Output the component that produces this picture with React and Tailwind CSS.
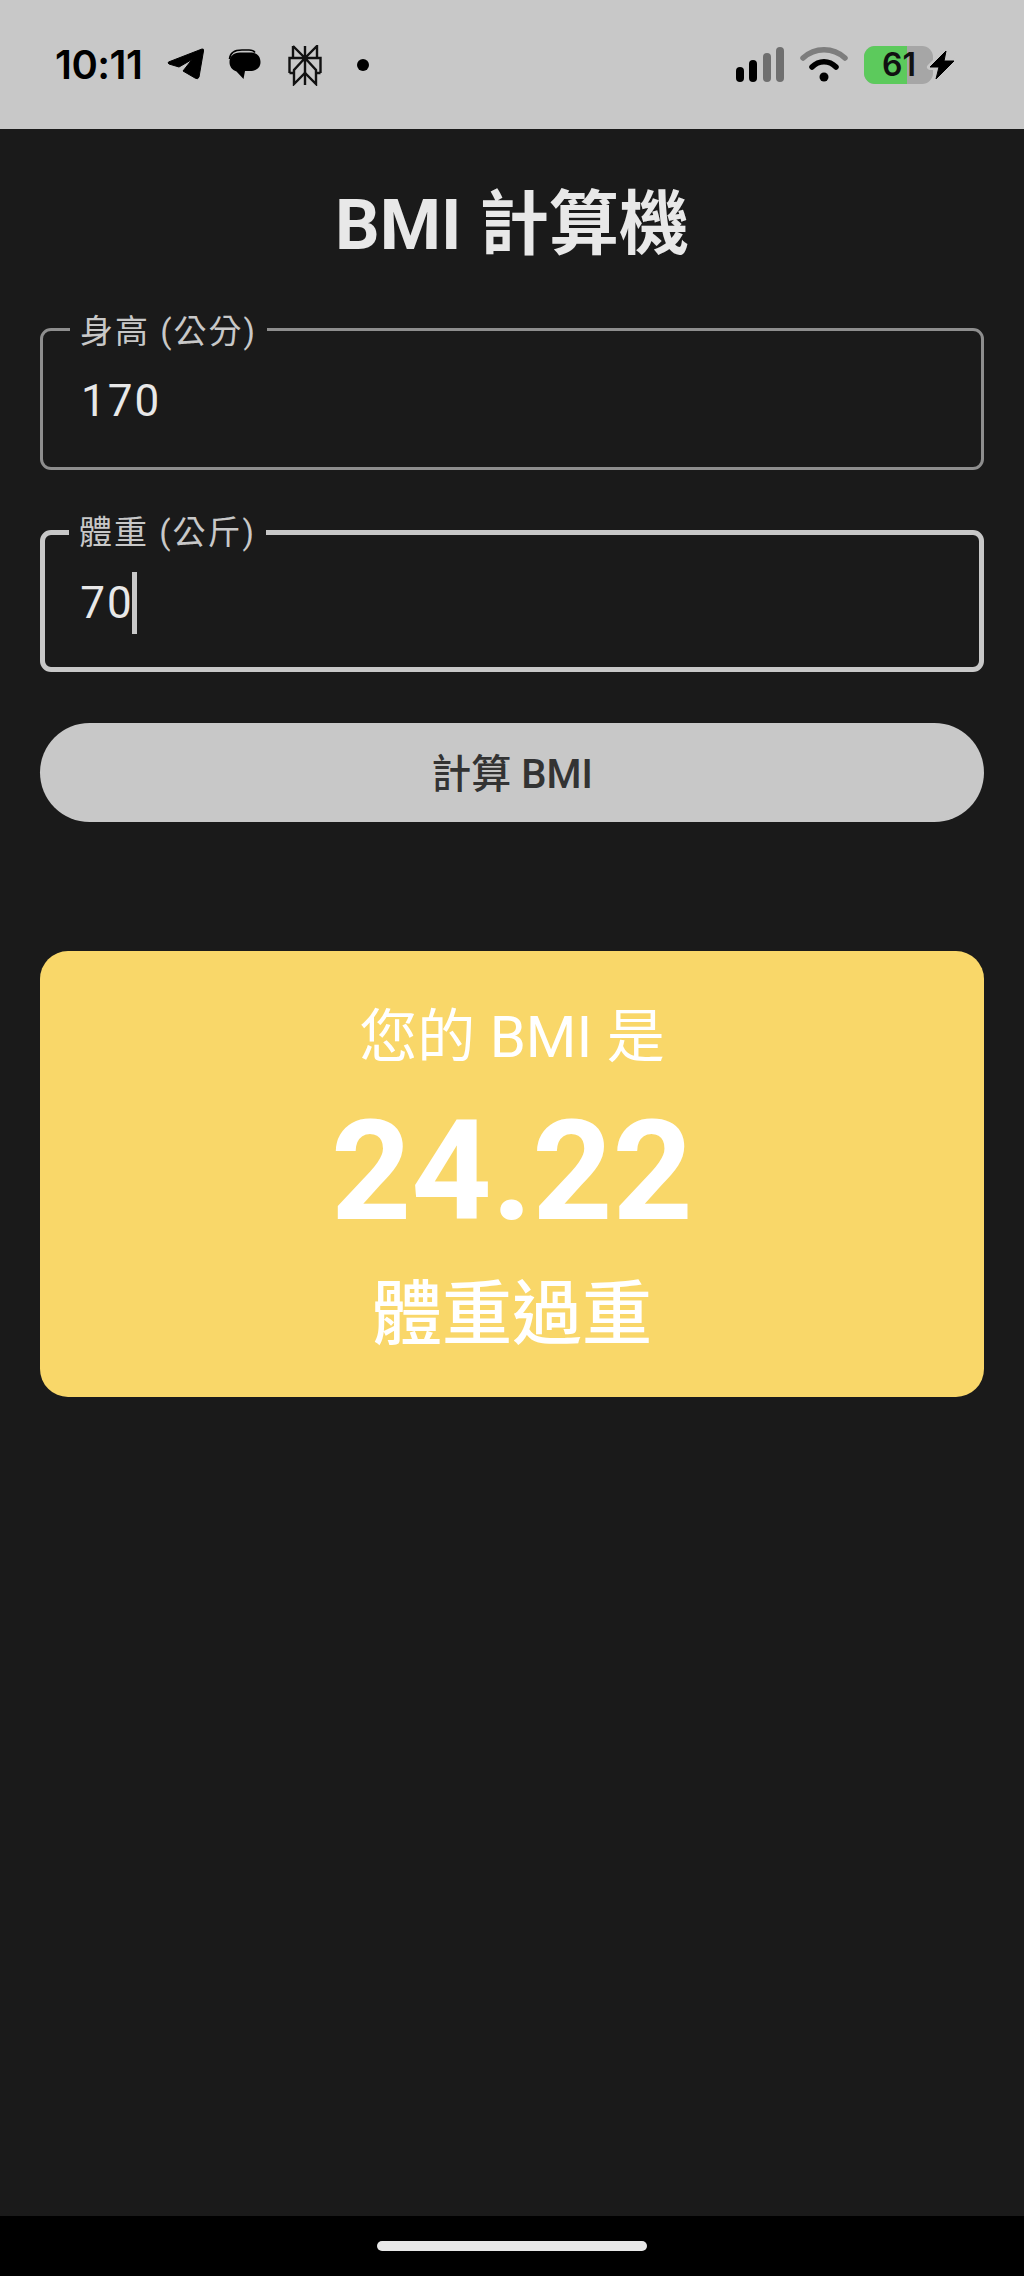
import React from "react";

const CJK = "font-['Roboto','Noto_Sans_CJK_TC',sans-serif]";

// Status bar icons
const TelegramIcon = () => (
  <svg width="38" height="34" viewBox="0 0 38 34" className="block">
    <path d="M1.5 14 L35 1 Q37 0.5 36.5 3 L32 29 Q31 32 28 30 L16 23 L25 11.5 L12 19 L2 16 Q0.5 15 1.5 14 Z" fill="#000" stroke="#000" strokeWidth="1" strokeLinejoin="round" />
  </svg>
);

const ChatIcon = () => (
  <svg width="34" height="32" viewBox="0 0 34 32" className="block">
    <path d="M1.5 10 C2 4 7 1 14 1 L21 1 C24 1 26 2 27 3.5" fill="none" stroke="#000" strokeWidth="1.6" />
    <path d="M12 3.5 L22 3.5 C29 3.5 32.5 7.5 32.5 13 C32.5 19 28 22 22 22 L17 22 L15.5 30 L8.5 22.5 C4 21 1.5 17.5 1.5 13 C1.5 7.5 5.5 3.5 12 3.5 Z" fill="#000" />
  </svg>
);

const PerplexityIcon = () => (
  <svg width="34" height="41" viewBox="0 0 34 41" fill="none" stroke="#111" strokeWidth="2.4" className="block">
    <path d="M17 1 V40" />
    <path d="M5 1 L17 13 L29 1 V13" />
    <path d="M5 1 V13" />
    <path d="M1.5 28 V13 H32.5 V28" />
    <path d="M1.5 28 H6 M32.5 28 H28" />
    <path d="M17 13 L6 25 V39 L17 28 L28 39 V25 L17 13" />
    <path d="M17 9 L21 13 L17 18 L13 13 Z" fill="#111" stroke="none" />
  </svg>
);

const SignalIcon = () => (
  <svg width="48" height="36" viewBox="0 0 48 36" className="block">
    <rect x="0" y="20" width="8" height="15" rx="4" fill="#000" />
    <rect x="13" y="13" width="8" height="22" rx="4" fill="#000" />
    <rect x="27" y="6" width="8" height="29" rx="4" fill="#6f6f6f" />
    <rect x="40" y="0" width="8" height="35" rx="4" fill="#6f6f6f" />
  </svg>
);

const WifiIcon = () => (
  <svg width="48" height="36" viewBox="0 0 48 36" fill="none" strokeLinecap="round" className="block">
    <path d="M3 11 C15 0 33 0 45 11" stroke="#7d7d7d" strokeWidth="5.5" />
    <path d="M12 20 C19 13 29 13 36 20" stroke="#000" strokeWidth="5.5" />
    <circle cx="24" cy="30" r="4.5" fill="#000" />
  </svg>
);

const BoltIcon = () => (
  <svg width="24" height="28" viewBox="0 0 24 28" className="block overflow-visible">
    <path d="M16 0 L0 16 H9 L6 28 L24 10 H14 Z" fill="#c8c8c8" stroke="#c8c8c8" strokeWidth="6" strokeLinejoin="round" />
    <path d="M16 0 L0 16 H9 L6 28 L24 10 H14 Z" fill="#000" stroke="#000" strokeWidth="1" strokeLinejoin="round" />
  </svg>
);

const StatusBar = () => (
  <div className="h-[129px] bg-[#c8c8c8] flex items-center justify-between pl-[55px] pr-[70px] pt-[1px] text-black">
    <div className="flex items-center">
      <span className="font-['Inter',sans-serif] font-semibold text-[40px] leading-none tracking-[-0.5px] w-[93px]">10:11</span>
      <div className="ml-[19px]"><TelegramIcon /></div>
      <div className="ml-[23px]"><ChatIcon /></div>
      <div className="ml-[26px]"><PerplexityIcon /></div>
      <div className="ml-[35px] w-[12px] h-[12px] rounded-full bg-black" />
    </div>
    <div className="flex items-center">
      <SignalIcon />
      <div className="ml-[16px]"><WifiIcon /></div>
      <div className="ml-[16px] relative w-[69px] h-[38px] rounded-[11px] bg-[#a6a6a6] overflow-hidden flex">
        <div className="w-[43px] h-full bg-[#5cca5c]" />
        <span className="absolute left-[18px] top-0 h-full flex items-center font-['Inter',sans-serif] font-semibold text-[32px] leading-none text-[#111]">61</span>
      </div>
      <div className="-ml-[3px] relative"><BoltIcon /></div>
    </div>
  </div>
);

const OutlinedField = ({ label, value, focused }) => (
  <div className={`relative h-[142px] rounded-[11px] flex items-center pl-[38px] pt-[4px] ${focused ? "border-[5.5px] border-[#c8c8c8]" : "border-[3px] border-[#8e8e8e]"}`}>
    <span className={`absolute px-[10px] bg-[#1a1a1a] text-[33px] leading-[44px] tracking-[2px] text-[#c8c8c8] whitespace-nowrap ${focused ? "-top-[24px] left-[24px]" : "-top-[21px] left-[27px]"}`}>
      {label}
    </span>
    <span className={`relative flex items-center text-[44px] leading-none tracking-[2px] text-[#e8e8e8] ${focused ? "-ml-[2.75px]" : ""}`}>
      {value}
      {focused && <span className="w-[5px] h-[62px] bg-[#c8c8c8] -ml-[2px]" />}
    </span>
  </div>
);

export default function App() {
  return (
    <div className={`relative w-[1024px] h-[2276px] bg-[#1a1a1a] flex flex-col ${CJK}`}>
      <StatusBar />

      <main className="flex-1 px-[40px]">
        <h1 className="mt-[66px] text-center text-[70px] leading-[60px] font-bold text-[#e8e8e8]">BMI 計算機</h1>

        <div className="mt-[73px]">
          <OutlinedField label="身高 (公分)" value="170" />
        </div>
        <div className="mt-[60px]">
          <OutlinedField label="體重 (公斤)" value="70" focused />
        </div>

        <button className="mt-[51px] w-full h-[99px] rounded-full bg-[#c8c8c8] pt-[5px] text-[40px] font-medium text-[#333] flex items-center justify-center">
          計算 BMI
        </button>

        <div className="mt-[129px] h-[446px] rounded-[28px] bg-[#f9d769] text-white text-center flex flex-col items-center">
          <div className="mt-[53px] text-[58px] leading-[66px]">您的 BMI 是</div>
          <div className="mt-[31px] text-[140px] leading-[140px] font-bold">24.22</div>
          <div className="mt-[34px] text-[70px] leading-[80px] font-medium">體重過重</div>
        </div>
      </main>

      <div className="h-[60px] bg-black flex justify-center pt-[25px]">
        <div className="w-[270px] h-[10px] rounded-full bg-[#e8e8e8]" />
      </div>
    </div>
  );
}
